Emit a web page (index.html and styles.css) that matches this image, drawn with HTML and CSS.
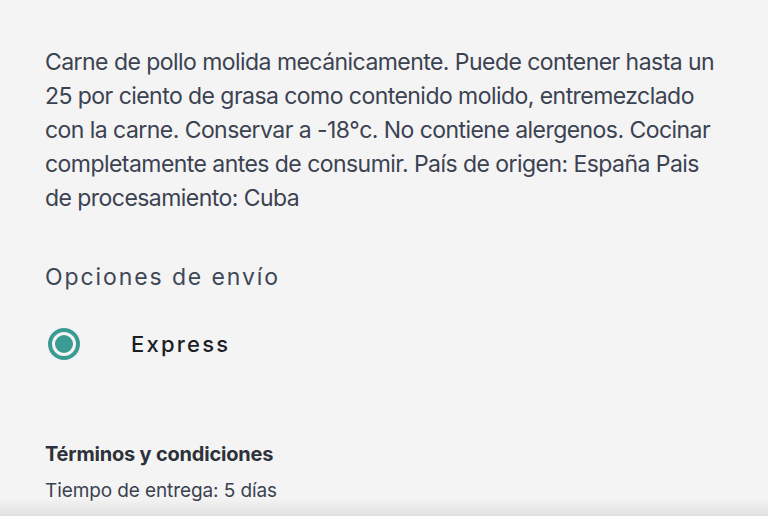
FILE: index.html
```html
<!DOCTYPE html>
<html lang="es">
<head>
<meta charset="utf-8">
<link rel="stylesheet" href="styles.css">
</head>
<body>
<main class="page">
  <p class="desc">Carne de pollo molida mecánicamente. Puede contener hasta un 25 por ciento de grasa como contenido molido, entremezclado con la carne. Conservar a -18°c. No contiene alergenos. Cocinar completamente antes de consumir. País de origen: España Pais de procesamiento: Cuba</p>
  <h2 class="section-title">Opciones de envío</h2>
  <label class="option">
    <span class="radio"><span class="radio-dot"></span></span>
    <span class="option-label">Express</span>
  </label>
  <h3 class="terms-title">Términos y condiciones</h3>
  <p class="terms-text">Tiempo de entrega: 5 días</p>
</main>
<div class="bottom-shade"></div>
</body>
</html>
```
FILE: styles.css
```css
html, body {
  margin: 0;
  padding: 0;
  background: #f4f4f4;
  height: 100%;
  overflow: hidden;
}
body {
  font-family: Inter, "Noto Sans", sans-serif;
  position: relative;
}
.page {
  padding: 45px 40px 0 45px;
}
.desc {
  margin: 0;
  font-size: 23px;
  line-height: 34px;
  color: #3b4251;
  letter-spacing: -0.55px;
  max-width: 677px;
}
.section-title {
  margin: 46px 0 0;
  font-size: 23px;
  line-height: 32px;
  font-weight: 400;
  letter-spacing: 1.9px;
  color: #3e4756;
}
.option {
  display: flex;
  align-items: center;
  margin-top: 34px;
  height: 34px;
}
.radio {
  width: 32px;
  height: 32px;
  box-sizing: border-box;
  border: 4px solid #3a9a94;
  border-radius: 50%;
  display: flex;
  align-items: center;
  justify-content: center;
  margin-left: 3px;
}
.radio-dot {
  width: 18px;
  height: 18px;
  border-radius: 50%;
  background: #3a9a94;
}
.option-label {
  margin-left: 51px;
  font-size: 22px;
  font-weight: 500;
  letter-spacing: 2.2px;
  color: #1c1f26;
}
.terms-title {
  margin: 78px 0 0;
  font-size: 20px;
  line-height: 30px;
  font-weight: 700;
  color: #2d3139;
  letter-spacing: -0.2px;
}
.terms-text {
  margin: 8px 0 0;
  font-size: 19px;
  line-height: 28px;
  color: #3b4251;
  letter-spacing: -0.1px;
}
.bottom-shade {
  position: absolute;
  left: 0;
  right: 0;
  bottom: 0;
  height: 18px;
  background: linear-gradient(to bottom, rgba(0,0,0,0), rgba(0,0,0,0.08));
}
```
